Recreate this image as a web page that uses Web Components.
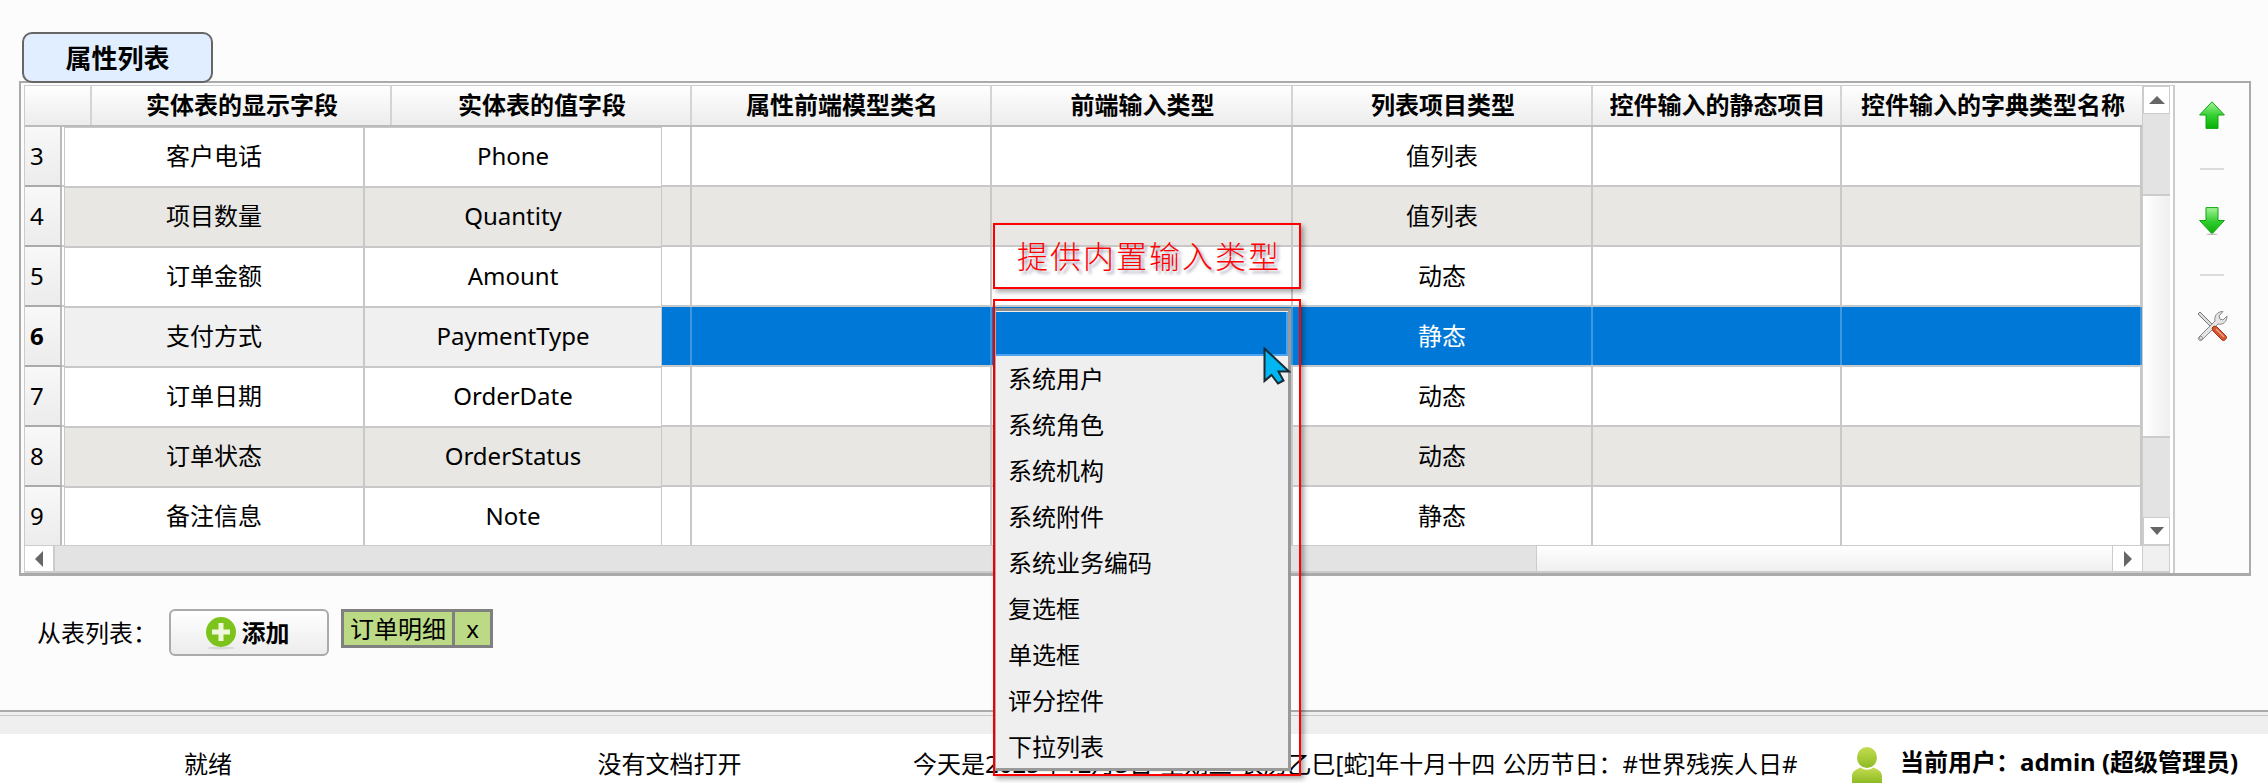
<!DOCTYPE html>
<html lang="zh-CN">
<head>
<meta charset="utf-8">
<title>属性列表</title>
<style>
  html, body { margin: 0; padding: 0; background: #fcfcfc; }
  body { font: 24px "Noto Sans", "Noto Sans CJK SC", sans-serif; color: #000; overflow: hidden; }
</style>
</head>
<body>
<app-shell>
  <tab-label>属性列表</tab-label>
  <attr-panel></attr-panel>
  <child-bar></child-bar>
  <status-bar></status-bar>
  <callout-box slot="over"></callout-box>
  <type-dropdown slot="over"></type-dropdown>
  <mouse-cursor slot="over"></mouse-cursor>
</app-shell>

<script>
const COLS = [67, 300, 300, 300, 301, 300, 249, 300];
const GRID_COLS = COLS.map(w => w + 'px').join(' ');

class AppShell extends HTMLElement {
  constructor() {
    super();
    this.attachShadow({mode: 'open'});
  }
  connectedCallback() {
    this.shadowRoot.innerHTML = `
      <style>
        :host { display: flex; flex-direction: column; position: relative; width: 2268px; height: 783px; overflow: hidden; background: #fcfcfc; }
      </style>
      <slot></slot>
      <slot name="over"></slot>
    `;
  }
}

class TabLabel extends HTMLElement {
  constructor() {
    super();
    this.attachShadow({mode: 'open'});
  }
  connectedCallback() {
    this.shadowRoot.innerHTML = `
      <style>
        :host {
          display: flex; align-items: center; justify-content: center; box-sizing: border-box;
          position: relative; z-index: 1;
          width: 191px; height: 51px; margin: 32px 0 -2px 22px;
          background: #e1eeff; border: 2px solid #666; border-radius: 10px;
          font-size: 26px; font-weight: 700; line-height: 1;
        }
      </style>
      <slot></slot>
    `;
  }
}

class AttrPanel extends HTMLElement {
  constructor() {
    super();
    this.attachShadow({mode: 'open'});
  }
  connectedCallback() {
    this.shadowRoot.innerHTML = `
      <style>
        :host {
          display: flex; box-sizing: border-box; width: 2232px; height: 495px; margin-left: 19px;
          border: 2px solid #aaa; border-bottom-width: 3px; background: #fcfcfc;
        }
        .frame {
          box-sizing: border-box; width: 2151px; height: 488px; margin: 2px 0 0 3px;
          border: 1px solid #ccc; border-right-width: 2px; border-bottom: 0;
          display: grid; grid-template-columns: 2117px 28px; grid-template-rows: 459px 28px;
          background: #fff;
        }
      </style>
      <div class="frame">
        <attr-grid></attr-grid>
        <v-scroll></v-scroll>
        <h-scroll></h-scroll>
        <scroll-corner></scroll-corner>
      </div>
      <side-tools></side-tools>
    `;
  }
}

class AttrGrid extends HTMLElement {
  constructor() {
    super();
    this.attachShadow({mode: 'open'});
  }
  connectedCallback() {
    const heads = ['', '实体表的显示字段', '实体表的值字段', '属性前端模型类名', '前端输入类型', '列表项目类型', '控件输入的静态项目', '控件输入的字典类型名称'];
    const rows = [
      [3, '客户电话', 'Phone', '值列表'],
      [4, '项目数量', 'Quantity', '值列表'],
      [5, '订单金额', 'Amount', '动态'],
      [6, '支付方式', 'PaymentType', '静态'],
      [7, '订单日期', 'OrderDate', '动态'],
      [8, '订单状态', 'OrderStatus', '动态'],
      [9, '备注信息', 'Note', '静态']
    ];
    const rowHtml = rows.map(r => `
      <div class="row ${r[0] % 2 == 0 ? 'alt' : ''} ${r[0] == 6 ? 'sel' : ''}">
        <div class="num-wrap"><div class="num">${r[0]}</div></div>
        <div class="cell"></div><div class="cell"></div><div class="cell"></div><div class="cell"></div>
        <div class="cell">${r[3]}</div>
        <div class="cell"></div><div class="cell"></div>
      </div>`).join('');
    const frozenHtml = rows.map(r => `
      <div class="frow ${r[0] % 2 == 0 ? 'alt' : ''} ${r[0] == 6 ? 'sel' : ''}">
        <div class="fcell">${r[1]}</div><div class="fcell">${r[2]}</div>
      </div>`).join('');

    this.shadowRoot.innerHTML = `
      <style>
        :host { display: flex; flex-direction: column; overflow: hidden; line-height: 1; }
        .head {
          display: grid; grid-template-columns: ${GRID_COLS}; height: 41px; flex: none; box-sizing: border-box;
          background: linear-gradient(#fff, #ececec); border-bottom: 2px solid #bbb;
        }
        .head div {
          display: flex; align-items: center; justify-content: center; white-space: nowrap;
          font-weight: 700; border-right: 2px solid #d4d4d4; box-sizing: border-box; padding: 0 0 2px 2px;
        }
        .head div:last-child { border-right: 0; }
        .body { position: relative; flex: 1; overflow: hidden; background: #fff; }
        .row {
          display: grid; grid-template-columns: ${GRID_COLS}; height: 60px; box-sizing: border-box;
          border-bottom: 2px solid #c8c8c8; background: #fff;
        }
        .row.alt { background: #e8e7e4; }
        .row.sel { background: #0078d7; color: #fff; }
        .cell {
          display: flex; align-items: center; justify-content: center; box-sizing: border-box;
          border-right: 2px solid #c8c8c8;
        }
        .row.sel .cell { border-right-color: #3f97e0; }
        .num-wrap { background: #fff; }
        .num {
          box-sizing: border-box; width: 37px; height: 60px; margin-bottom: -2px; padding-left: 5px;
          display: flex; align-items: center; color: #000;
          background: linear-gradient(#f8f8f8, #ececec); border-right: 2px solid #bbb; border-bottom: 2px solid #aaa;
        }
        .row.sel .num { font-weight: 700; }
        .frozen {
          position: absolute; left: 39px; top: 0; width: 598px;
          box-sizing: border-box; border: 1px solid #c8c8c8; border-bottom: 0;
          background: #fff;
        }
        .frow {
          display: grid; grid-template-columns: 300px 296px; height: 60px; box-sizing: border-box;
          border-bottom: 2px solid #c8c8c8; background: #fff;
        }
        .frow.alt { background: #e8e7e4; }
        .frow.sel { background: #f0f0f0; }
        .fcell {
          display: flex; align-items: center; justify-content: center;
          box-sizing: border-box; padding-bottom: 2px;
        }
        .fcell:first-child { border-right: 2px solid #c8c8c8; }
      </style>
      <div class="head">${heads.map(h => `<div>${h}</div>`).join('')}</div>
      <div class="body">
        ${rowHtml}
        <div class="frozen">${frozenHtml}</div>
      </div>
    `;
  }
}

class VScroll extends HTMLElement {
  constructor() {
    super();
    this.attachShadow({mode: 'open'});
  }
  connectedCallback() {
    this.shadowRoot.innerHTML = `
      <style>
        :host { display: flex; flex-direction: column; box-sizing: border-box; background: #e3e3e3; border-left: 1px solid #ccc; }
        .btn {
          flex: none; height: 28px; box-sizing: border-box; background: #fff; border: 1px solid #ccc;
          display: flex; align-items: center; justify-content: center;
        }
        .track { flex: none; height: 80px; }
        .thumb { flex: none; height: 244px; background: linear-gradient(90deg, #fff, #efefef); border-top: 2px solid #ccc; border-bottom: 2px solid #ccc; box-sizing: border-box; }
        .rest { flex: 1; }
        svg { display: block; }
      </style>
      <div class="btn"><svg width="16" height="8"><path d="M8 0 16 8H0Z" fill="#666"/></svg></div>
      <div class="track"></div>
      <div class="thumb"></div>
      <div class="rest"></div>
      <div class="btn"><svg width="14" height="8"><path d="M0 0H14L7 8Z" fill="#666"/></svg></div>
    `;
  }
}

class HScroll extends HTMLElement {
  constructor() {
    super();
    this.attachShadow({mode: 'open'});
  }
  connectedCallback() {
    this.shadowRoot.innerHTML = `
      <style>
        :host { display: flex; box-sizing: border-box; background: #e3e3e3; border-top: 1px solid #ccc; border-bottom: 2px solid #ccc; }
        .btn {
          flex: none; width: 30px; box-sizing: border-box; background: #fff; border-right: 2px solid #ccc;
          display: flex; align-items: center; justify-content: center;
        }
        .btn.r { border-right: 0; border-left: 1px solid #ccc; }
        .track { flex: none; width: 1481px; }
        .thumb { flex: 1; background: linear-gradient(#fff, #efefef); border-left: 1px solid #ccc; }
        svg { display: block; }
      </style>
      <div class="btn"><svg width="8" height="16"><path d="M8 0V16L0 8Z" fill="#666"/></svg></div>
      <div class="track"></div>
      <div class="thumb"></div>
      <div class="btn r"><svg width="8" height="16"><path d="M0 0 8 8 0 16Z" fill="#666"/></svg></div>
    `;
  }
}

class ScrollCorner extends HTMLElement {
  constructor() {
    super();
    this.attachShadow({mode: 'open'});
  }
  connectedCallback() {
    this.shadowRoot.innerHTML = `
      <style>
        :host { display: block; box-sizing: border-box; background: #f0f0f0; border: 1px solid #ccc; border-bottom-width: 2px; }
      </style>
    `;
  }
}

class SideTools extends HTMLElement {
  constructor() {
    super();
    this.attachShadow({mode: 'open'});
  }
  connectedCallback() {
    this.shadowRoot.innerHTML = `
      <style>
        :host { display: flex; flex-direction: column; align-items: center; flex: 1; padding-top: 18px; box-sizing: border-box; }
        svg { display: block; flex: none; }
        .sep { flex: none; width: 24px; height: 2px; background: #dcdcdc; margin: 39px 0 37px; }
      </style>
      <svg width="26" height="28" viewBox="0 0 26 28">
        <defs>
          <linearGradient id="au" x1="0" y1="0" x2="0" y2="1"><stop offset="0" stop-color="#a6f29a"/><stop offset=".5" stop-color="#35d133"/><stop offset="1" stop-color="#06b006"/></linearGradient>
        </defs>
        <path d="M13 .8 25.4 14H19V27.4H7V14H.6Z" fill="url(#au)" stroke="#0fa60f" stroke-width="1"/>
      </svg>
      <div class="sep"></div>
      <svg width="26" height="28" viewBox="0 0 26 28">
        <defs>
          <linearGradient id="ad" x1="0" y1="0" x2="0" y2="1"><stop offset="0" stop-color="#a6f29a"/><stop offset=".55" stop-color="#2fcb2c"/><stop offset="1" stop-color="#09b009"/></linearGradient>
        </defs>
        <path d="M7 .6H19V13.5H25.4L13 26.8.6 13.5H7Z" fill="url(#ad)" stroke="#0fa60f" stroke-width="1"/>
        <ellipse cx="13" cy="27.2" rx="6" ry=".8" fill="#bbb"/>
      </svg>
      <div class="sep" style="margin-bottom:34px"></div>
      <svg width="32" height="32" viewBox="0 0 32 32">
        <path d="M2 4 4 2 17 15 15 17Z" fill="#ddd" stroke="#777" stroke-width="1"/>
        <path d="M3 27 19 11C18 6 21 1.500 27 1.500L23 6 24 9 27 10 31 6C31 12 27 15 22 14L6 30C4 32 1 29 3 27Z" fill="#e4e4e4" stroke="#888" stroke-width="1"/>
        <circle cx="5" cy="28" r="1.500" fill="#fff" stroke="#777" stroke-width=".8"/>
        <path d="M16 18 18 16 21 17 30 26C32 28 28 32 26 30L17 21Z" fill="#d6532d" stroke="#a03a1c" stroke-width="1"/>
        <path d="M20 19 28 27" stroke="#f0a58c" stroke-width="1.500"/>
      </svg>
    `;
  }
}

class ChildBar extends HTMLElement {
  constructor() {
    super();
    this.attachShadow({mode: 'open'});
  }
  connectedCallback() {
    this.shadowRoot.innerHTML = `
      <style>
        :host { display: flex; align-items: flex-start; height: 134px; padding: 33px 0 0 37px; box-sizing: border-box; line-height: 1; }
        .label { width: 132px; height: 47px; display: flex; align-items: center; flex: none; white-space: nowrap; }
        .add {
          box-sizing: border-box; width: 160px; height: 47px; flex: none; padding-right: 4px;
          border: 2px solid #aaa; border-radius: 6px; background: linear-gradient(#fff, #ececec);
          display: flex; align-items: center; justify-content: center; gap: 5px;
          font-weight: 700;
        }
        svg { display: block; }
        .tag {
          display: flex; box-sizing: border-box; height: 39px; margin-left: 12px; flex: none;
          border: 3px solid #808080; background: #bcd985;
        }
        .tag span { display: flex; align-items: center; justify-content: center; }
        .tag .name { width: 108px; border-right: 3px solid #808080; box-sizing: content-box; }
        .tag .x { width: 35px; }
      </style>
      <div class="label">从表列表：</div>
      <div class="add">
        <svg width="32" height="34" viewBox="0 0 32 34">
          <ellipse cx="16" cy="32" rx="14" ry="1.500" fill="#d8d8d8"/>
          <circle cx="16" cy="16" r="15" fill="#7cc41b"/>
          <path d="M13.500 7H18.500V13.500H25V18.500H18.500V25H13.500V18.500H7V13.500H13.500Z" fill="#eef8dc"/>
        </svg>
        <span>添加</span>
      </div>
      <div class="tag"><span class="name">订单明细</span><span class="x">x</span></div>
    `;
  }
}

class StatusBar extends HTMLElement {
  constructor() {
    super();
    this.attachShadow({mode: 'open'});
  }
  connectedCallback() {
    this.shadowRoot.innerHTML = `
      <style>
        :host { display: flex; flex-direction: column; flex: 1; line-height: 1; }
        .rule { flex: none; height: 24px; box-sizing: border-box; background: #efefef; border-top: 2px solid #aaa; position: relative; }
        .rule::after { content: ""; display: block; height: 1px; margin-top: 3px; background: #c8c8c8; }
        .bar { flex: 1; display: flex; align-items: center; background: #fff; white-space: nowrap; }
        .a { width: 416px; flex: none; text-align: center; padding-top: 11px; }
        .b { width: 497px; flex: none; text-align: center; padding: 11px 0 0 10px; box-sizing: border-box; }
        .c { width: 939px; flex: none; padding-top: 11px; word-spacing: 1px; }
        .d { display: flex; align-items: center; flex: none; gap: 18px; font-weight: 700; }
        .d span { padding-top: 7px; }
        svg { display: block; margin-top: 13px; }
      </style>
      <div class="rule"></div>
      <div class="bar">
        <div class="a">就绪</div>
        <div class="b">没有文档打开</div>
        <div class="c">今天是2025年12月3日 星期三 农历乙巳[蛇]年十月十四 公历节日：#世界残疾人日#</div>
        <div class="d">
          <svg width="30" height="36" viewBox="0 0 30 36">
            <defs>
              <linearGradient id="ug" x1="0" y1="0" x2="0" y2="1"><stop offset="0" stop-color="#c4dc50"/><stop offset="1" stop-color="#8dbb24"/></linearGradient>
            </defs>
            <ellipse cx="15" cy="10.500" rx="10" ry="10.500" fill="url(#ug)"/>
            <path d="M0 36V29C0 24 5 22 9 20.500 12 23.500 18 23.500 21 20.500 25 22 30 24 30 29V36Z" fill="url(#ug)"/>
          </svg>
          <span>当前用户：admin (超级管理员)</span>
        </div>
      </div>
    `;
  }
}

class CalloutBox extends HTMLElement {
  constructor() {
    super();
    this.attachShadow({mode: 'open'});
  }
  connectedCallback() {
    this.shadowRoot.innerHTML = `
      <style>
        :host {
          position: absolute; left: 993px; top: 223px; width: 308px; height: 66px; box-sizing: border-box;
          display: flex; align-items: center; padding-left: 22px;
          border: 2px solid #f00; box-shadow: 3px 3px 5px rgba(0,0,0,.35);
          color: #f00; font-size: 31px; font-weight: 300; letter-spacing: 2px; line-height: 1;
          text-shadow: 3px 3px 3px rgba(70,70,110,.5); white-space: nowrap;
        }
      </style>
      提供内置输入类型
    `;
  }
}

class TypeDropdown extends HTMLElement {
  constructor() {
    super();
    this.attachShadow({mode: 'open'});
  }
  connectedCallback() {
    const items = ['系统用户', '系统角色', '系统机构', '系统附件', '系统业务编码', '复选框', '单选框', '评分控件', '下拉列表'];
    this.shadowRoot.innerHTML = `
      <style>
        :host {
          position: absolute; left: 993px; top: 299px; width: 308px; height: 477px; box-sizing: border-box;
          border: 2px solid #f00; box-shadow: 3px 3px 5px rgba(0,0,0,.35); line-height: 1;
        }
        .pop {
          box-sizing: border-box; width: 296px; height: 463px; margin: 7px 0 0 0; padding-top: 1px;
          background: #efefef; border: 1px solid #aaa; border-top: 3px solid #8c8c8c;
          border-right: 3px solid #999; border-bottom: 3px solid #999;
          box-shadow: -1px 0 2px rgba(0,0,0,.15);
        }
        .cur { height: 44px; box-sizing: border-box; background: #0078d7; border: solid #4da3ef; border-width: 0 2px 2px 0; }
        .item { height: 46px; padding-left: 12px; display: flex; align-items: center; white-space: nowrap; }
      </style>
      <div class="pop">
        <div class="cur"></div>
        ${items.map(i => `<div class="item">${i}</div>`).join('')}
      </div>
    `;
  }
}

class MouseCursor extends HTMLElement {
  constructor() {
    super();
    this.attachShadow({mode: 'open'});
  }
  connectedCallback() {
    this.shadowRoot.innerHTML = `
      <style>
        :host { position: absolute; left: 1263px; top: 347px; width: 28px; height: 38px; }
        svg { display: block; }
      </style>
      <svg width="28" height="38" viewBox="0 0 28 38">
        <path d="M1.500 1.500V34L8.500 28 15 36.500 20.500 33.500 15.500 24.500H26Z" fill="#00b7f1" stroke="#1c2b33" stroke-width="2" stroke-linejoin="miter"/>
      </svg>
    `;
  }
}

customElements.define('app-shell', AppShell);
customElements.define('tab-label', TabLabel);
customElements.define('attr-panel', AttrPanel);
customElements.define('attr-grid', AttrGrid);
customElements.define('v-scroll', VScroll);
customElements.define('h-scroll', HScroll);
customElements.define('scroll-corner', ScrollCorner);
customElements.define('side-tools', SideTools);
customElements.define('child-bar', ChildBar);
customElements.define('status-bar', StatusBar);
customElements.define('callout-box', CalloutBox);
customElements.define('type-dropdown', TypeDropdown);
customElements.define('mouse-cursor', MouseCursor);
</script>
</body>
</html>
